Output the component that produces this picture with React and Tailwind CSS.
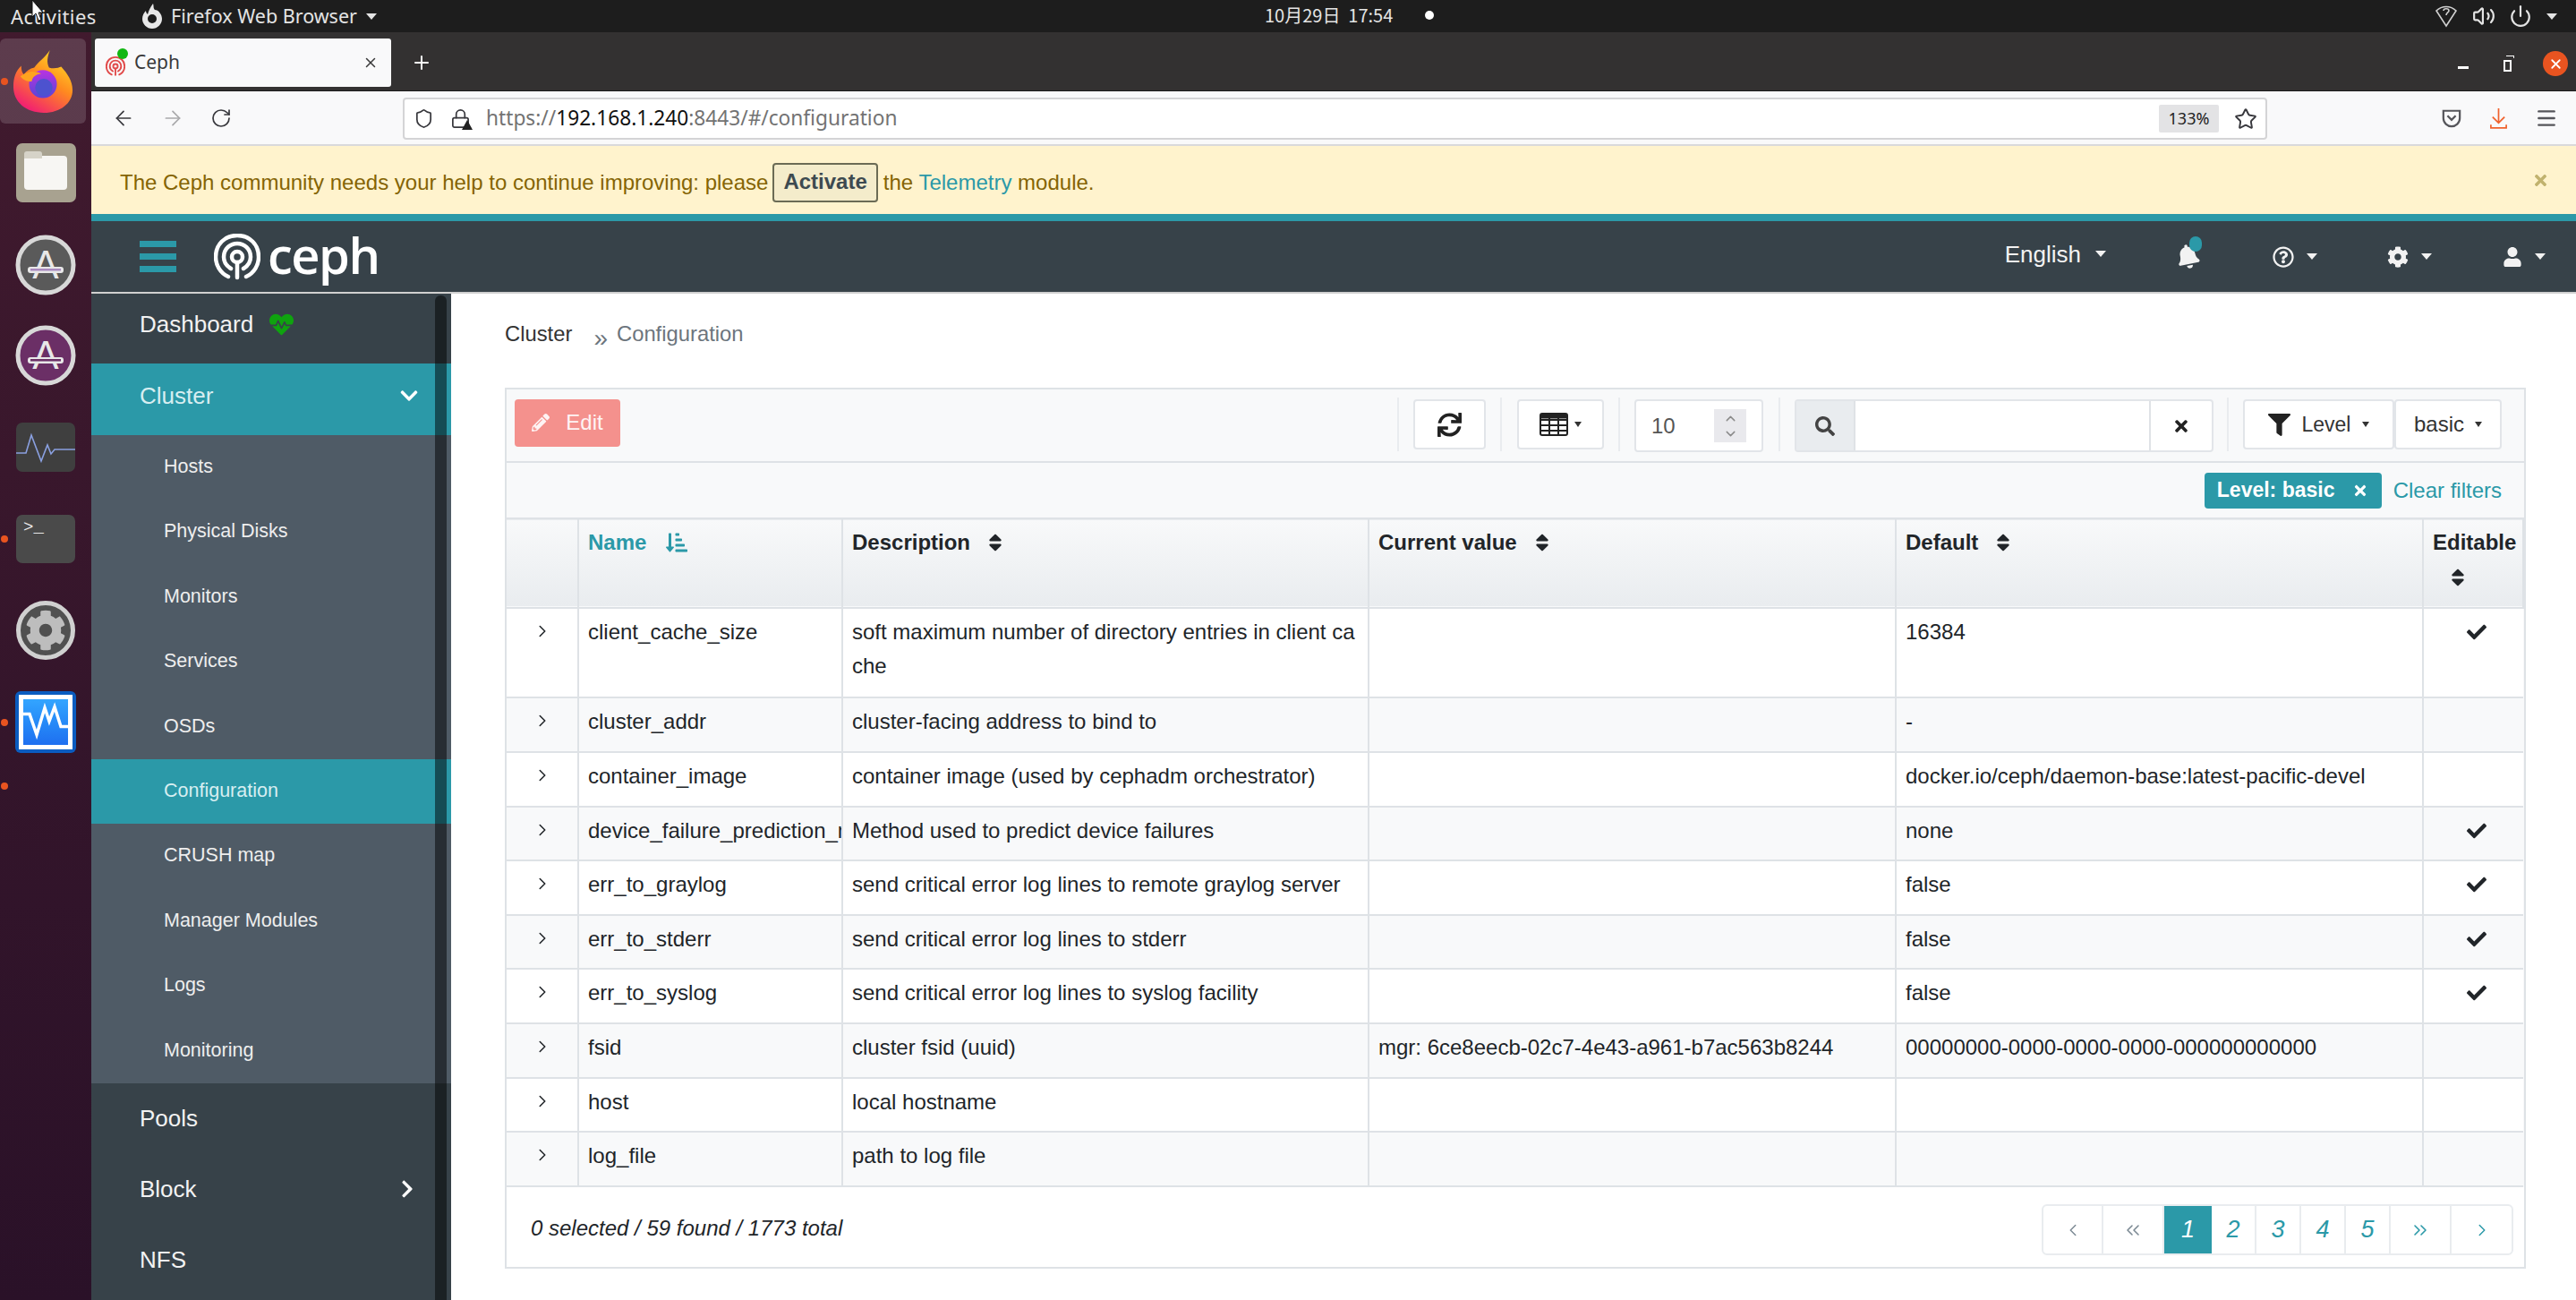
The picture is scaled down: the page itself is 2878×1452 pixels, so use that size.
import React from "react";
import { ArrowLeft, ArrowRight, RotateCw, Shield, Lock, Star, Menu, X, Plus, Volume2, Power, ChevronUp, ChevronDown, ChevronRight, ChevronLeft, ChevronsLeft, ChevronsRight } from "lucide-react";
import {
  FaBell, FaCheck, FaChevronDown, FaChevronRight, FaCog, FaFilter, FaHeartbeat, FaPencilAlt, FaRegQuestionCircle,
  FaSearch, FaSort, FaSortAmountDownAlt, FaSync, FaTimes, FaUser,
} from "react-icons/fa";

const subItems = ["Hosts", "Physical Disks", "Monitors", "Services", "OSDs", "Configuration", "CRUSH map", "Manager Modules", "Logs", "Monitoring"];

const rows = [
  { h: "h-[100px]", name: "client_cache_size", desc: "soft maximum number of directory entries in client cache", cur: "", def: "16384", edit: true },
  { h: "h-[61px]", name: "cluster_addr", desc: "cluster-facing address to bind to", cur: "", def: "-", edit: false },
  { h: "h-[61px]", name: "container_image", desc: "container image (used by cephadm orchestrator)", cur: "", def: "docker.io/ceph/daemon-base:latest-pacific-devel", edit: false },
  { h: "h-[60px]", name: "device_failure_prediction_mode", desc: "Method used to predict device failures", cur: "", def: "none", edit: true },
  { h: "h-[61px]", name: "err_to_graylog", desc: "send critical error log lines to remote graylog server", cur: "", def: "false", edit: true },
  { h: "h-[60px]", name: "err_to_stderr", desc: "send critical error log lines to stderr", cur: "", def: "false", edit: true },
  { h: "h-[61px]", name: "err_to_syslog", desc: "send critical error log lines to syslog facility", cur: "", def: "false", edit: true },
  { h: "h-[61px]", name: "fsid", desc: "cluster fsid (uuid)", cur: "mgr: 6ce8eecb-02c7-4e43-a961-b7ac563b8244", def: "00000000-0000-0000-0000-000000000000", edit: false },
  { h: "h-[60px]", name: "host", desc: "local hostname", cur: "", def: "", edit: false },
  { h: "h-[61px]", name: "log_file", desc: "path to log file", cur: "", def: "", edit: false },
];

const Caret = ({ className = "" }) => (
  <span className={`inline-block w-0 h-0 border-x-[6px] border-x-transparent border-t-[7px] border-t-current ${className}`} />
);

const SmallCaret = () => (
  <span className="inline-block w-0 h-0 border-x-[4px] border-x-transparent border-t-[6px] border-t-current" />
);

const CephMark = ({ className, color = "#fff" }) => (
  <svg viewBox="0 0 52 52" className={className} fill="none" stroke={color} strokeWidth="4.5" strokeLinecap="round">
    <path d="M16 48C7 44 2 35 2 26 2 12 12 2 26 2s24 10 24 24c0 9-5 18-14 22" />
    <path d="M19 39c-5-3-8-8-8-13 0-9 7-15 15-15s15 6 15 15c0 5-3 10-8 13" />
    <circle cx="26" cy="26" r="6" />
    <path d="M26 32v17" />
  </svg>
);

const FirefoxLogo = () => (
  <svg viewBox="0 0 70 72" className="w-[68px] h-[70px]">
    <defs>
      <linearGradient id="ffa" x1="0.8" y1="0" x2="0.2" y2="1">
        <stop offset="0" stopColor="#ffe226" />
        <stop offset="0.45" stopColor="#ff8a1f" />
        <stop offset="1" stopColor="#f0127c" />
      </linearGradient>
      <linearGradient id="ffb" x1="0.5" y1="0" x2="0.5" y2="1">
        <stop offset="0" stopColor="#b833e1" />
        <stop offset="1" stopColor="#5a45d6" />
      </linearGradient>
    </defs>
    <path d="M43 0c-3 8-4 14-1 20 6 2 11 0 14-1 7 8 13 16 13 27 0 15-14 26-33 26C16 72 1 60 1 42 1 31 4 24 10 18c0 5 1 8 3 10 3-4 7-7 12-8 5-7 12-11 18-20z" fill="url(#ffa)" />
    <circle cx="35" cy="39" r="16" fill="url(#ffb)" />
    <circle cx="36" cy="43" r="10" fill="#4d52cf" />
    <path d="M9 30c8-6 16-7 24-3-7 1-10 4-11 9-6 0-10-2-13-6z" fill="#ffa31f" />
  </svg>
);

const RingA = ({ fill, bar }) => (
  <svg viewBox="0 0 68 68" className="w-[68px] h-[68px]">
    <circle cx="34" cy="34" r="31" fill={fill} stroke="#d8d8d8" strokeWidth="5" />
    <text x="34" y="49" textAnchor="middle" fontFamily="Liberation Sans, sans-serif" fontSize="44" fill="#e8e8e8">A</text>
    <rect x="14" y="36" width="40" height="7" rx="3" fill="#e8e8e8" />
    <rect x="17" y="38" width="34" height="2.5" fill={bar} />
  </svg>
);

const Dot = () => <span className="absolute left-[1px] top-1/2 -mt-[4px] w-[8px] h-[8px] rounded-full bg-[#e95420]" />;

const Dock = () => (
  <div className="w-[102px] shrink-0 flex flex-col items-center bg-gradient-to-b from-[#411a2e] to-[#2a1128]">
    <div className="relative mt-[7px] w-[96px] h-[95px] self-start rounded-[6px] bg-white/15 flex items-center justify-center">
      <Dot />
      <FirefoxLogo />
    </div>
    <div className="mt-[22px] w-[67px] h-[66px] rounded-[7px] bg-[#a8a290] flex items-center justify-center">
      <div className="relative w-[48px] h-[38px] rounded-[4px] bg-[#f7f6f3]">
        <div className="absolute -top-[5px] left-0 w-[20px] h-[8px] rounded-t-[3px] bg-[#d6d3c8]" />
      </div>
    </div>
    <div className="mt-[36px] h-[66px]"><RingA fill="#5a5a5a" bar="#a98ac0" /></div>
    <div className="mt-[35px] h-[66px]"><RingA fill="#6b2f66" bar="#6b2f66" /></div>
    <div className="mt-[43px] w-[66px] h-[55px] rounded-[7px] bg-[#3f3f3f]">
      <svg viewBox="0 0 66 55" className="w-full h-full" fill="none" stroke="#8aa0e0" strokeWidth="1.6">
        <path d="M0 34h11l6-20 11 29 7-18 4 10 4-5h23" />
      </svg>
    </div>
    <div className="relative mt-[48px] w-full h-[54px] flex justify-center">
      <Dot />
      <div className="w-[66px] h-[54px] rounded-[7px] bg-[#4a4a4a] pl-[8px] pt-[2px] font-['Liberation_Mono',monospace] text-[19px] leading-[24px] text-[#e8e8e8]">&gt;_</div>
    </div>
    <div className="mt-[42px] w-[66px] h-[66px] rounded-full bg-[#505050] border-[5px] border-[#d0d0d0] flex items-center justify-center text-[#bdbdbd]">
      <FaCog size={46} />
    </div>
    <div className="relative mt-[35px] w-full h-[69px] flex justify-center">
      <Dot />
      <div className="w-[68px] h-[69px] rounded-[6px] bg-[#0a5cc0] p-[4px]">
        <div className="w-full h-full border-[5px] border-white bg-gradient-to-b from-[#33a5ff] to-[#1f6ff0]">
          <svg viewBox="0 0 50 50" className="w-full h-full" fill="none" stroke="#fff" strokeWidth="3.5">
            <path d="M0 16h7l8 23 9-30 5 15 6-16 7 22h8" />
          </svg>
        </div>
      </div>
    </div>
    <div className="relative mt-[33px] w-full h-[70px]">
      <span className="absolute left-[1px] top-0 w-[8px] h-[8px] rounded-full bg-[#e95420]" />
    </div>
  </div>
);

const TopBar = () => (
  <div className="h-[36px] shrink-0 bg-[#1d1d1d] flex items-center justify-between text-[#e4e4e4] font-['Noto_Sans',sans-serif] relative">
    <div className="flex items-center">
      <span className="ml-[12px] w-[93px] text-[22px] tracking-[0.4px]">Activities</span>
      <svg viewBox="0 0 24 28" className="ml-[53px] w-[24px] h-[28px]" fill="#e8e8e8">
        <path d="M13 0c1 3 0 5 2 7 4 0 8 5 8 10 0 6-5 11-11 11S1 23 1 17c0-4 2-7 4-9 0 2 1 3 2 4 1-4 3-8 6-12zm-1 12a5 5 0 1 0 0 10 5 5 0 0 0 0-10z" fillRule="evenodd" />
      </svg>
      <span className="ml-[9px] text-[21.5px]">Firefox Web Browser</span>
      <Caret className="ml-[10px]" />
    </div>
    <div className="flex items-center absolute left-[1413px] -mt-[2px] text-[20px] font-['Noto_Sans_CJK_JP','Noto_Sans',sans-serif]">
      <span>10月29日&nbsp; 17:54</span>
      <span className="ml-[36px] w-[10px] h-[10px] rounded-full bg-white" />
    </div>
    <div className="flex items-center mr-[21px]">
      <svg viewBox="0 0 24 26" className="w-[24px] h-[26px]" fill="none" stroke="#d0d0d0" strokeWidth="1.6">
        <path d="M1 7c6-6 16-6 22 0L12 24z" />
        <path d="M9 7c0-3 6-3 6 0 0 2-3 2-3 5" />
      </svg>
      <Volume2 size={26} className="ml-[17px]" />
      <Power size={26} className="ml-[15px]" />
      <Caret className="ml-[16px]" />
    </div>
  </div>
);

const TabBar = () => (
  <div className="h-[66px] shrink-0 bg-[#333131] border-b border-[#1c1b1b] flex items-start text-white">
    <div className="mt-[7px] ml-[4px] w-[331px] h-[54px] rounded-[3px] bg-[#f9f9fa] flex items-center pl-[12px] pr-[14px]">
      <span className="relative w-[24px] h-[30px]">
        <CephMark className="w-[22px] h-[26px] mt-[6px]" color="#e14b4b" />
        <span className="absolute -top-[1px] right-[-1px] w-[12px] h-[12px] rounded-full bg-[#12b712]" />
      </span>
      <span className="ml-[8px] text-[#3a3a3a] font-['Noto_Sans',sans-serif] text-[21px]">Ceph</span>
      <X size={18} className="ml-auto text-[#3a3a3a]" />
    </div>
    <Plus size={24} className="ml-[22px] mt-[22px]" />
    <div className="ml-auto flex items-center mt-[21px] pr-[9px]">
      <span className="w-[12px] h-[3px] bg-white mt-[8px]" />
      <span className="ml-[39px] relative w-[12px] h-[18px]">
        <span className="absolute left-0 bottom-0 w-[9px] h-[13px] border-2 border-white" />
        <span className="absolute right-0 top-0 w-[9px] h-[3px] border-t border-r border-white" />
      </span>
      <span className="ml-[32px] w-[28px] h-[28px] rounded-full bg-[#e95420] flex items-center justify-center">
        <X size={17} strokeWidth={2.5} />
      </span>
    </div>
  </div>
);

const BrowserToolbar = () => (
  <div className="h-[61px] shrink-0 bg-[#f9f9fa] border-b-2 border-[#d9d9db] flex items-center text-[#38383d]">
    <ArrowLeft size={26} strokeWidth={1.6} className="ml-[23px]" />
    <ArrowRight size={26} strokeWidth={1.6} className="ml-[29px] text-[#a9a9ab]" />
    <RotateCw size={24} strokeWidth={1.7} className="ml-[29px]" />
    <div className="ml-[191px] mt-[2px] w-[2083px] h-[47px] bg-white border-2 border-[#d4d4d6] rounded-[4px] flex items-center">
      <Shield size={23} strokeWidth={1.8} className="ml-[10px]" />
      <span className="relative ml-[18px]">
        <Lock size={23} strokeWidth={1.8} />
        <span className="absolute right-[-2px] bottom-[-1px] w-0 h-0 border-x-[6px] border-x-transparent border-b-[11px] border-b-[#222]" />
      </span>
      <span className="ml-[17px] font-['Noto_Sans',sans-serif] text-[22.7px] text-[#737373]">
        https://<span className="text-[#111]">192.168.1.240</span>:8443/#/configuration
      </span>
      <span className="ml-auto w-[67px] h-[31px] rounded-[2px] bg-[#e3e3e5] text-center font-['Noto_Sans',sans-serif] text-[18px] leading-[31px] text-[#222]">133%</span>
      <Star size={26} strokeWidth={1.8} className="ml-[17px] mr-[9px]" />
    </div>
    <div className="ml-auto flex items-center">
      <svg viewBox="0 0 24 24" className="w-[22px] h-[22px]" fill="none" stroke="#55555a" strokeWidth="2.4">
        <path d="M2 3h20v9c0 6-5 10-10 10S2 18 2 12z" />
        <path d="M7 9l5 5 5-5" />
      </svg>
      <svg viewBox="0 0 22 25" className="ml-[31px] w-[21px] h-[24px]" fill="none" stroke="#f0622d" strokeWidth="1.8">
        <path d="M11 1v17M4 11l7 7 7-7M2 20v4h18v-4" />
      </svg>
      <Menu size={26} strokeWidth={2.2} className="ml-[30px] mr-[20px] text-[#55555a]" />
    </div>
  </div>
);

const Banner = () => (
  <div className="h-[76px] shrink-0 bg-[#fff3cd] flex items-center pl-[32px] pr-[30px] text-[#856404] text-[24px]">
    <span className="pt-[5px]">The Ceph community needs your help to continue improving: please</span>
    <span className="ml-[5px] mt-[5px] h-[44px] px-[10px] rounded-[4px] border-2 border-[#6b6b55] bg-[#f4eccb] text-[#3d4a50] font-bold leading-[38px]">Activate</span>
    <span className="ml-[6px] pt-[5px]">the <span className="text-[#2b99a8]">Telemetry</span> module.</span>
    <FaTimes size={19} className="ml-auto text-[#c1b26e]" />
  </div>
);

const NavBar = () => (
  <div className="h-[81px] shrink-0 bg-[#374249] border-b-2 border-[#d0d0d0] flex items-center text-[#f2f2f2]">
    <div className="ml-[54px] w-[41px] flex flex-col gap-[7px]">
      <span className="h-[7px] bg-[#2b99a8]" />
      <span className="h-[7px] bg-[#2b99a8]" />
      <span className="h-[7px] bg-[#2b99a8]" />
    </div>
    <CephMark className="ml-[42px] w-[52px] h-[52px]" />
    <span className="ml-[8px] -mt-[6px] font-['Open_Sans',sans-serif] font-semibold text-[56px] leading-[60px] text-white tracking-[-1.5px]">ceph</span>
    <div className="ml-auto flex items-center">
      <span className="text-[26px] -mt-[4px]">English</span>
      <Caret className="ml-[16px] -mt-[6px]" />
      <span className="relative ml-[78px]">
        <FaBell size={27} className="-scale-x-100 -rotate-12" />
        <span className="absolute -top-[9px] left-[15px] w-[14px] h-[17px] rounded-full bg-[#2b99a8]" />
      </span>
      <FaRegQuestionCircle size={24} className="ml-[81px]" />
      <Caret className="ml-[14px]" />
      <FaCog size={24} className="ml-[78px]" />
      <Caret className="ml-[14px]" />
      <FaUser size={22} className="ml-[79px]" />
      <Caret className="ml-[14px] mr-[34px]" />
    </div>
  </div>
);

const Sidebar = () => (
  <div className="relative w-[402px] shrink-0 bg-[#374249] text-[26px] text-[#f2f2f2]">
    <div className="h-[78px] flex items-center pl-[54px] pb-[10px]">
      Dashboard
      <FaHeartbeat size={27} className="ml-[18px] text-[#0fa30f]" />
    </div>
    <div className="h-[80px] flex items-center pl-[54px] pr-[36px] pb-[8px] bg-[#2b99a8] text-[#d7eef1]">
      Cluster
      <FaChevronDown size={22} className="ml-auto text-white" />
    </div>
    <div className="flex flex-col bg-[#4f5b66] text-[21.5px]">
      {subItems.map((s) => (
        <div key={s} className={`h-[72.4px] flex items-center pl-[81px] pb-[2px] ${s === "Configuration" ? "bg-[#2b99a8] text-[#d7eef1]" : "text-[#eeeeee]"}`}>
          {s}
        </div>
      ))}
    </div>
    {["Pools", "Block", "NFS"].map((s) => (
      <div key={s} className="h-[79px] flex items-center pl-[54px] pr-[38px]">
        {s}
        {s === "Block" && <FaChevronRight size={22} className="ml-auto text-white" />}
      </div>
    ))}
    <div className="absolute left-[384px] top-[2px] bottom-0 w-[13px] rounded-t-[6px] bg-black/50" />
  </div>
);

const Sep = ({ className }) => <span className={`block w-[2px] h-[60px] -mt-[2px] bg-[#e9ecef] ${className}`} />;

const ToolBtn = ({ className, children }) => (
  <div className={`h-[56px] rounded-[4px] border-2 border-[#e2e5e9] bg-white flex items-center justify-center ${className}`}>{children}</div>
);

const PanelToolbar = () => (
  <div className="h-[82px] border-b-2 border-[#dee2e6] flex items-start pt-[11px] pl-[9px] pr-[25px] text-[#333]">
    <div className="w-[118px] h-[53px] rounded-[4px] bg-[#f4918d] flex items-center justify-center gap-[18px] pb-[2px] text-white/90 text-[24px]">
      <FaPencilAlt size={20} />
      Edit
    </div>
    <Sep className="ml-auto" />
    <ToolBtn className="ml-[16px] w-[81px]">
      <FaSync size={27} className="text-[#222]" />
    </ToolBtn>
    <Sep className="ml-[16px]" />
    <ToolBtn className="ml-[17px] w-[97px] gap-[7px]">
      <svg viewBox="0 0 32 26" className="w-[32px] h-[26px]" fill="none" stroke="#222" strokeWidth="2">
        <rect x="1" y="1" width="30" height="24" rx="2" />
        <path d="M1 8h30M1 14h30M1 20h30M11 3v22M21 3v22" />
        <path d="M1 4h30" strokeWidth="5" />
      </svg>
      <SmallCaret />
    </ToolBtn>
    <Sep className="ml-[16px]" />
    <div className="ml-[16px] w-[144px] h-[59px] rounded-[4px] border-2 border-[#e2e5e9] bg-white flex items-center pl-[17px] pr-[17px] text-[24px] text-[#555]">
      10
      <span className="ml-auto w-[36px] h-[37px] bg-[#e9e9ed] flex flex-col items-center justify-center text-[#8a8a8a]">
        <ChevronUp size={17} />
        <ChevronDown size={17} />
      </span>
    </div>
    <Sep className="ml-[17px]" />
    <div className="ml-[16px] w-[468px] h-[59px] rounded-[4px] border-2 border-[#e2e5e9] bg-white flex items-stretch">
      <span className="w-[66px] bg-[#e9ecef] border-r-2 border-[#dfe2e6] flex items-center justify-center">
        <FaSearch size={22} className="text-[#444]" />
      </span>
      <span className="flex-1" />
      <span className="w-[70px] border-l-2 border-[#dfe2e6] flex items-center justify-center">
        <FaTimes size={20} className="text-[#222]" />
      </span>
    </div>
    <Sep className="ml-[15px]" />
    <ToolBtn className="ml-[16px] w-[169px] gap-[13px] text-[23px]">
      <FaFilter size={25} className="text-[#222]" />
      Level
      <SmallCaret />
    </ToolBtn>
    <ToolBtn className="w-[120px] gap-[12px] text-[24px]">
      basic
      <SmallCaret />
    </ToolBtn>
  </div>
);

const FilterRow = () => (
  <div className="h-[61px] flex items-center justify-end pr-[25px] text-[24px]">
    <span className="w-[198px] h-[40px] rounded-[4px] bg-[#2b99a8] text-white font-bold flex items-center justify-center gap-[20px] text-[23px]">
      Level: basic
      <FaTimes size={18} />
    </span>
    <span className="ml-[13px] text-[#2b99a8]">Clear filters</span>
  </div>
);

const Head = ({ label, active, stacked }) => (
  <th className={`align-top text-left font-bold border-x-2 border-[#dee2e6] pt-[7px] px-[10px] leading-[38px] ${active ? "text-[#2b99a8]" : "text-[#212529]"}`}>
    <span className={stacked ? "block" : "inline-flex items-center"}>
      {label}
      {active ? (
        <FaSortAmountDownAlt size={24} className="ml-[22px]" />
      ) : stacked ? (
        <FaSort size={24} className="mt-[8px] ml-[16px] text-[#212529]" />
      ) : (
        <FaSort size={24} className="ml-[16px] text-[#212529]" />
      )}
    </span>
  </th>
);

const ConfigTable = () => (
  <table className="w-[2253px] table-fixed border-collapse text-[24px] text-[#212529]">
    <colgroup>
      <col className="w-[80px]" />
      <col className="w-[295px]" />
      <col className="w-[588px]" />
      <col className="w-[589px]" />
      <col className="w-[589px]" />
      <col className="w-[112px]" />
    </colgroup>
    <thead>
      <tr className="h-[100px] bg-gradient-to-b from-[#f8f9fa] to-[#e9ecef] border-y-2 border-[#dee2e6]">
        <th className="border-r-2 border-[#dee2e6]" />
        <Head label="Name" active />
        <Head label="Description" />
        <Head label="Current value" />
        <Head label="Default" />
        <Head label="Editable" stacked />
      </tr>
    </thead>
    <tbody>
      {rows.map((r, i) => (
        <tr key={r.name} className={`${r.h} ${i % 2 ? "bg-[#f8f9fa]" : "bg-white"} border-b-2 border-[#dee2e6]`}>
          <td className="align-top pt-[14px] border-r-2 border-[#dee2e6]">
            <ChevronRight size={22} strokeWidth={1.7} className="mx-auto" />
          </td>
          <td className="align-top pt-[7px] px-[10px] leading-[38px] border-r-2 border-[#dee2e6] whitespace-nowrap overflow-hidden">{r.name}</td>
          <td className="align-top pt-[7px] px-[10px] leading-[38px] border-r-2 border-[#dee2e6] break-all">{r.desc}</td>
          <td className="align-top pt-[7px] px-[10px] leading-[38px] border-r-2 border-[#dee2e6]">{r.cur}</td>
          <td className="align-top pt-[7px] px-[10px] leading-[38px] border-r-2 border-[#dee2e6]">{r.def}</td>
          <td className="align-top pt-[15px] pl-[6px]">
            {r.edit && <FaCheck size={22} className="mx-auto text-[#212529]" />}
          </td>
        </tr>
      ))}
    </tbody>
  </table>
);

const Pager = () => (
  <div className="flex mt-[6px] h-[57px] rounded-[6px] border-2 border-[#e9ecef] overflow-hidden text-[27px] italic text-[#2b99a8]">
    <span className="w-[67px] border-r-2 border-[#e9ecef] flex items-center justify-center text-[#7c8a94]"><ChevronLeft size={22} strokeWidth={1.6} /></span>
    <span className="w-[68px] border-r-2 border-[#e9ecef] flex items-center justify-center text-[#7c8a94]"><ChevronsLeft size={24} strokeWidth={1.6} /></span>
    <span className="w-[53px] bg-[#2b99a8] text-white flex items-center justify-center">1</span>
    {["2", "3", "4", "5"].map((n) => (
      <span key={n} className="w-[50px] border-r-2 border-[#e9ecef] flex items-center justify-center">{n}</span>
    ))}
    <span className="w-[68px] border-r-2 border-[#e9ecef] flex items-center justify-center"><ChevronsRight size={24} strokeWidth={1.6} /></span>
    <span className="w-[67px] flex items-center justify-center"><ChevronRight size={22} strokeWidth={1.6} /></span>
  </div>
);

export default function App() {
  return (
    <div className="w-[2878px] h-[1452px] overflow-hidden flex flex-col font-['Liberation_Sans',Arial,sans-serif] relative">
      <TopBar />
      <div className="flex-1 flex min-h-0">
        <Dock />
        <div className="flex-1 min-w-0 flex flex-col">
          <TabBar />
          <BrowserToolbar />
          <Banner />
          <div className="h-[8px] shrink-0 bg-[#2b99a8]" />
          <NavBar />
          <div className="flex-1 flex min-h-0 overflow-hidden">
            <Sidebar />
            <div className="flex-1 pl-[60px] pr-[57px] bg-white">
              <div className="h-[105px] flex items-start pt-[28px] text-[23.8px] leading-[34px]">
                <span className="text-[#333]">Cluster</span>
                <span className="ml-[24px] mt-[5px] text-[28px] text-[#6c757d]">»</span>
                <span className="ml-[10px] text-[#6c757d]">Configuration</span>
              </div>
              <div className="border-2 border-[#dee2e6] bg-[#f8f9fa]">
                <PanelToolbar />
                <FilterRow />
                <ConfigTable />
                <div className="h-[89px] bg-white flex items-center justify-between pl-[27px] pr-[12px]">
                  <span className="italic pt-[2px] text-[24px] text-[#212529]">0 selected / 59 found / 1773 total</span>
                  <Pager />
                </div>
              </div>
            </div>
          </div>
        </div>
      </div>
      {/* mouse pointer sitting on top of the Activities label */}
      <svg viewBox="0 0 14 24" className="absolute left-[35px] top-0 w-[14px] h-[24px]">
        <path d="M1 0v19l4-4 3 8 3-1-3-8h5z" fill="#fff" stroke="#111" strokeWidth="1" />
      </svg>
    </div>
  );
}
